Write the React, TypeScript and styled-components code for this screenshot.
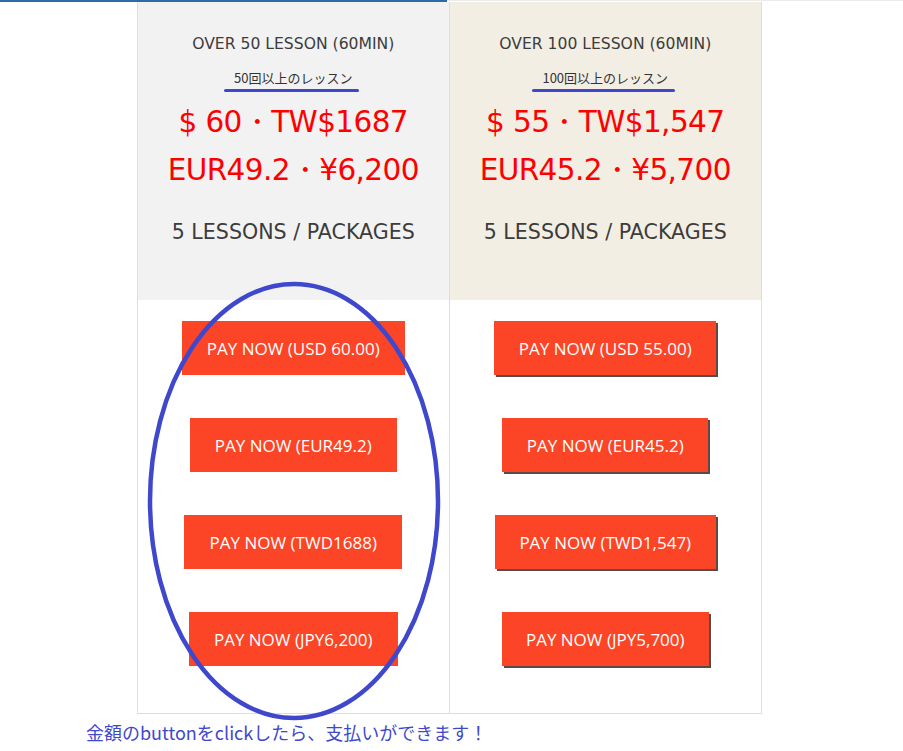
import React from "react";
import styled, { createGlobalStyle } from "styled-components";

const Global = createGlobalStyle`
  html, body { margin: 0; padding: 0; background: #fff; }
  body { font-family: "Open Sans", "Noto Sans CJK JP", sans-serif; }
`;

const Page = styled.div`
  position: relative;
  width: 903px;
  height: 751px;
  overflow: hidden;
`;

const TopBar = styled.div`
  display: flex;
  height: 2px;
`;

const TopActive = styled.div`
  width: 447px;
  background: #2f6aa8;
`;

const TopRest = styled.div`
  flex: 1;
  border-top: 1px solid #ececec;
`;

const Cards = styled.div`
  display: flex;
  margin-left: 137px;
  width: 625px;
`;

const Card = styled.div`
  width: 311px;
  border: 1px solid #dedede;
  border-top: none;
  & + & {
    border-left: 1px solid #dedede;
    margin-left: -1px;
    width: 312px;
  }
  display: flex;
  flex-direction: column;
`;

const Header = styled.div<{ $bg: string }>`
  background: ${(p) => p.$bg};
  height: 298px;
  display: flex;
  flex-direction: column;
  align-items: center;
  padding-top: 32px;
  box-sizing: border-box;
  font-family: "DejaVu Sans", sans-serif;
`;

const Title = styled.div`
  font-size: 15.6px;
  color: #3c3c3c;
  line-height: 20px;
`;

const Sub = styled.div`
  position: relative;
  margin-top: 16px;
  font-family: "Noto Sans CJK JP", sans-serif;
  font-size: 13px;
  color: #333;
  line-height: 16px;
`;

const Underline = styled.span`
  position: absolute;
  left: -10px;
  right: -7px;
  bottom: -6px;
  height: 3px;
  border-radius: 2px;
  background: #3f48cc;
`;

const Price = styled.div<{ $first?: boolean }>`
  color: #ff0000;
  font-size: 29.5px;
  line-height: 34px;
  margin-top: ${(p) => (p.$first ? "19px" : "14px")};
  letter-spacing: -0.6px;
`;

const Packages = styled.div`
  margin-top: 33px;
  font-size: 20.6px;
  line-height: 24px;
  color: #3c3c3c;
`;

const Buttons = styled.div`
  display: flex;
  flex-direction: column;
  align-items: center;
  gap: 43px;
  padding: 21px 0 47px;
`;

const PayButton = styled.button<{ $shadow?: boolean; $w: number }>`
  width: ${(p) => p.$w}px;
  height: 54px;
  border: none;
  background: #fc4426;
  color: #fff;
  font-family: "Open Sans", sans-serif;
  font-size: 17px;
  padding: 0;
  cursor: pointer;
  box-shadow: ${(p) => (p.$shadow ? "2px 2px 0 #5a4a48" : "none")};
  box-sizing: border-box;
`;

const Note = styled.div`
  margin: 6px 0 0 86px;
  font-family: "Noto Sans CJK JP", sans-serif;
  font-size: 18px;
  color: #3f48cc;
  line-height: 24px;
`;

const Ellipse = styled.svg`
  position: absolute;
  left: 140px;
  top: 272px;
  pointer-events: none;
`;

type Plan = {
  title: string;
  sub: string;
  p1: string;
  p2: string;
  bg: string;
  shadow: boolean;
  buttons: { label: string; w: number }[];
};

const plans: Plan[] = [
  {
    title: "OVER 50 LESSON (60MIN)",
    sub: "50回以上のレッスン",
    p1: "$ 60・TW$1687",
    p2: "EUR49.2・¥6,200",
    bg: "#f2f2f2",
    shadow: false,
    buttons: [
      { label: "PAY NOW (USD 60.00)", w: 223 },
      { label: "PAY NOW (EUR49.2)", w: 207 },
      { label: "PAY NOW (TWD1688)", w: 218 },
      { label: "PAY NOW (JPY6,200)", w: 209 },
    ],
  },
  {
    title: "OVER 100 LESSON (60MIN)",
    sub: "100回以上のレッスン",
    p1: "$ 55・TW$1,547",
    p2: "EUR45.2・¥5,700",
    bg: "#f2eee3",
    shadow: true,
    buttons: [
      { label: "PAY NOW (USD 55.00)", w: 222 },
      { label: "PAY NOW (EUR45.2)", w: 206 },
      { label: "PAY NOW (TWD1,547)", w: 221 },
      { label: "PAY NOW (JPY5,700)", w: 207 },
    ],
  },
];

export default function App() {
  return (
    <Page>
      <Global />
      <TopBar>
        <TopActive />
        <TopRest />
      </TopBar>
      <Cards>
        {plans.map((p) => (
          <Card key={p.title}>
            <Header $bg={p.bg}>
              <Title>{p.title}</Title>
              <Sub>
                {p.sub}
                <Underline />
              </Sub>
              <Price $first>{p.p1}</Price>
              <Price>{p.p2}</Price>
              <Packages>5 LESSONS / PACKAGES</Packages>
            </Header>
            <Buttons>
              {p.buttons.map((b) => (
                <PayButton key={b.label} $shadow={p.shadow} $w={b.w}>
                  {b.label}
                </PayButton>
              ))}
            </Buttons>
          </Card>
        ))}
      </Cards>
      <Note>金額のbuttonをclickしたら、支払いができます！</Note>
      <Ellipse width="310" height="460" viewBox="0 0 310 460">
        <ellipse cx="154" cy="229" rx="144" ry="217" fill="none" stroke="#3f48cc" strokeWidth="4.5" />
      </Ellipse>
    </Page>
  );
}
